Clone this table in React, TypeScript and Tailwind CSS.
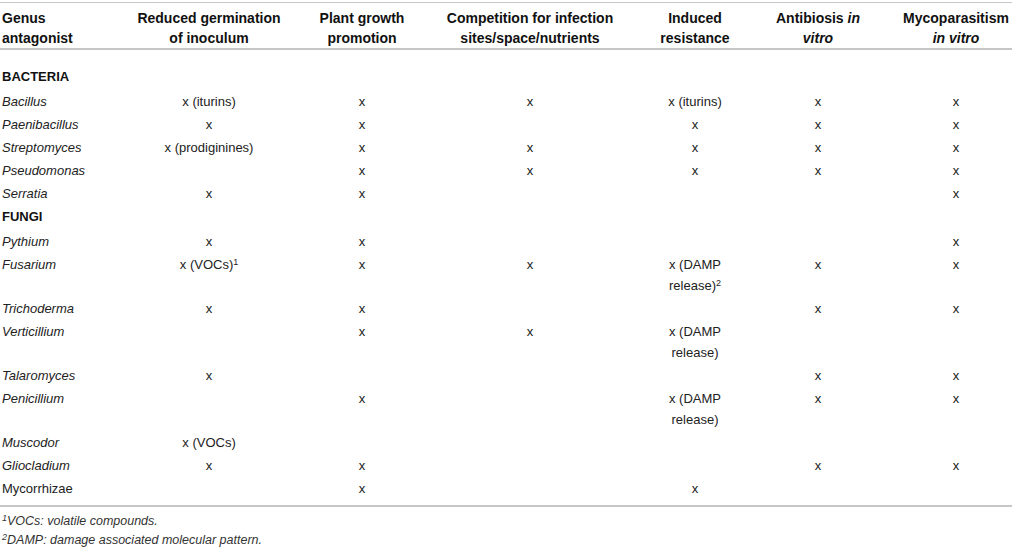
import React from "react";

type Cell = React.ReactNode;

type Row = {
    name: string;
    italic?: boolean;
    cells: Cell[];
};

const damp = (
    <>
        x (DAMP
        <br />
        release)
    </>
);

const bacteria: Row[] = [
    { name: "Bacillus", italic: true, cells: ["x (iturins)", "x", "x", "x (iturins)", "x", "x"] },
    { name: "Paenibacillus", italic: true, cells: ["x", "x", "", "x", "x", "x"] },
    { name: "Streptomyces", italic: true, cells: ["x (prodiginines)", "x", "x", "x", "x", "x"] },
    { name: "Pseudomonas", italic: true, cells: ["", "x", "x", "x", "x", "x"] },
    { name: "Serratia", italic: true, cells: ["x", "x", "", "", "", "x"] },
];

const fungi: Row[] = [
    { name: "Pythium", italic: true, cells: ["x", "x", "", "", "", "x"] },
    {
        name: "Fusarium",
        italic: true,
        cells: [
            <>x (VOCs)<sup className="text-[9px]">1</sup></>,
            "x",
            "x",
            <>x (DAMP<br />release)<sup className="text-[9px]">2</sup></>,
            "x",
            "x",
        ],
    },
    { name: "Trichoderma", italic: true, cells: ["x", "x", "", "", "x", "x"] },
    { name: "Verticillium", italic: true, cells: ["", "x", "x", damp, "", ""] },
    { name: "Talaromyces", italic: true, cells: ["x", "", "", "", "x", "x"] },
    { name: "Penicillium", italic: true, cells: ["", "x", "", damp, "x", "x"] },
    { name: "Muscodor", italic: true, cells: ["x (VOCs)", "", "", "", "", ""] },
    { name: "Gliocladium", italic: true, cells: ["x", "x", "", "", "x", "x"] },
    { name: "Mycorrhizae", cells: ["", "x", "", "x", "", ""] },
];

function DataRow({ row, last }: { row: Row; last?: boolean }) {
    const pad = last ? "pt-[1px] pb-[6px]" : "py-[1px]";
    return (
        <tr className="align-top">
            <td className={`pl-[2px] text-left whitespace-nowrap ${row.italic ? "italic" : ""} ${pad}`}>{row.name}</td>
            {row.cells.map((c, i) => (
                <td key={i} className={`text-center whitespace-nowrap ${pad}`}>
                    {c}
                </td>
            ))}
        </tr>
    );
}

function GroupRow({ label, first }: { label: string; first?: boolean }) {
    return (
        <tr>
            <td colSpan={7} className={`pl-[2px] text-left font-bold text-[#111] pb-[3px] ${first ? "pt-[16px]" : "pt-[1px]"}`}>
                {label}
            </td>
        </tr>
    );
}

export default function App() {
    const th = "font-bold text-center align-top pt-[5px] pb-0 whitespace-nowrap";
    return (
        <div className="w-[1014px] h-[548px] bg-white pt-[2px]" style={{ fontFamily: '"Liberation Sans", Arial, sans-serif' }}>
            <table className="table-fixed w-[1012px] border-collapse text-[13px] leading-[21px] text-[#222]">
                <colgroup>
                    <col className="w-[100px]" />
                    <col className="w-[218px]" />
                    <col className="w-[88px]" />
                    <col className="w-[248px]" />
                    <col className="w-[82px]" />
                    <col className="w-[164px]" />
                    <col className="w-[112px]" />
                </colgroup>
                <thead className="text-[14px] leading-[20px] text-[#111]">
                    <tr className="border-t border-[#c6c6c6] border-b-2 border-b-[#c6c6c6]">
                        <th className={`${th} text-left! pl-[2px]`}>
                            Genus
                            <br />
                            antagonist
                        </th>
                        <th className={th}>
                            Reduced germination
                            <br />
                            of inoculum
                        </th>
                        <th className={th}>
                            Plant growth
                            <br />
                            promotion
                        </th>
                        <th className={th}>
                            Competition for infection
                            <br />
                            sites/space/nutrients
                        </th>
                        <th className={th}>
                            Induced
                            <br />
                            resistance
                        </th>
                        <th className={th}>
                            Antibiosis <i>in</i>
                            <br />
                            <i>vitro</i>
                        </th>
                        <th className={th}>
                            Mycoparasitism
                            <br />
                            <i>in vitro</i>
                        </th>
                    </tr>
                </thead>
                <tbody>
                    <GroupRow label="BACTERIA" first />
                    {bacteria.map((r) => (
                        <DataRow key={r.name} row={r} />
                    ))}
                    <GroupRow label="FUNGI" />
                    {fungi.map((r, i) => (
                        <DataRow key={r.name} row={r} last={i === fungi.length - 1} />
                    ))}
                </tbody>
            </table>
            <div className="border-t-2 border-[#c6c6c6] w-[1012px] pt-[5px] pl-[2px] text-[12.5px] leading-[19px] italic text-[#333]">
                <p>
                    <sup className="text-[9px]">1</sup>VOCs: volatile compounds.
                </p>
                <p>
                    <sup className="text-[9px]">2</sup>DAMP: damage associated molecular pattern.
                </p>
            </div>
        </div>
    );
}
